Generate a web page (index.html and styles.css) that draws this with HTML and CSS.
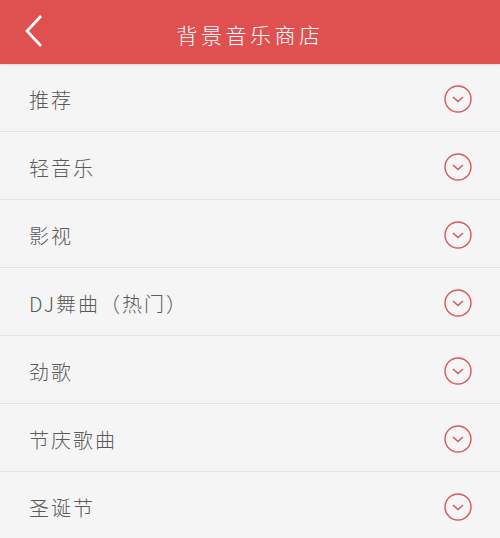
FILE: index.html
```html
<!DOCTYPE html>
<html lang="zh-CN">
<head>
    <meta charset="UTF-8">
    <meta name="viewport" content="width=device-width, initial-scale=1.0">
    <title>背景音乐商店</title>
    <link rel="stylesheet" href="styles.css">
</head>
<body>
    <header class="top-bar">
        <span class="back">
            <svg width="20" height="34" viewBox="0 0 20 34"><path d="M17 2 L3 17 L17 32" fill="none" stroke="#fff" stroke-width="2.6"/></svg>
        </span>
        <h1>背景音乐商店</h1>
    </header>
    <ul class="cat-list">
        <li class="cat-item"><span>推荐</span><i class="arrow"></i></li>
        <li class="cat-item"><span>轻音乐</span><i class="arrow"></i></li>
        <li class="cat-item"><span>影视</span><i class="arrow"></i></li>
        <li class="cat-item"><span>DJ舞曲（热门）</span><i class="arrow"></i></li>
        <li class="cat-item"><span>劲歌</span><i class="arrow"></i></li>
        <li class="cat-item"><span>节庆歌曲</span><i class="arrow"></i></li>
        <li class="cat-item"><span>圣诞节</span><i class="arrow"></i></li>
    </ul>

    <script>
        // same chevron-in-circle for every row
        const icon = '<svg width="30" height="30" viewBox="0 0 30 30"><circle cx="15" cy="15" r="13" fill="none" stroke="#d65a5a" stroke-width="1.4"/><path d="M10 13 L15 17.5 L20 13" fill="none" stroke="#d65a5a" stroke-width="1.6"/></svg>';
        document.querySelectorAll('.arrow').forEach(el => el.innerHTML = icon);
    </script>
</body>
</html>
```

FILE: styles.css
```css
body {
    margin: 0;
    background-color: #f5f5f5;
    font-family: "Noto Sans CJK SC", "Liberation Serif", serif;
    overflow: hidden;
}
.top-bar {
    height: 64px;
    background-color: #df5151;
    display: flex;
    align-items: center;
    justify-content: center;
    position: relative;
    box-shadow: 0 1px 2px rgba(0, 0, 0, 0.12);
}
.back {
    position: absolute;
    left: 24px;
    top: 14px;
}
.top-bar h1 {
    margin: 3px 0 0;
    color: #ffffff;
    font-size: 21px;
    font-weight: 300;
    letter-spacing: 3.5px;
}
.cat-list {
    list-style: none;
    margin: 0;
    padding: 0;
}
.cat-item {
    height: 67px;
    border-bottom: 1px solid #e2e2e2;
    display: flex;
    align-items: center;
    justify-content: space-between;
    padding: 0 27px 0 29px;
    color: #5a5a5a;
    font-size: 20px;
    font-weight: 300;
    letter-spacing: 2px;
}
.cat-item span {
    padding-top: 3px;
}
.arrow {
    display: flex;
    padding-top: 2px;
}
```
